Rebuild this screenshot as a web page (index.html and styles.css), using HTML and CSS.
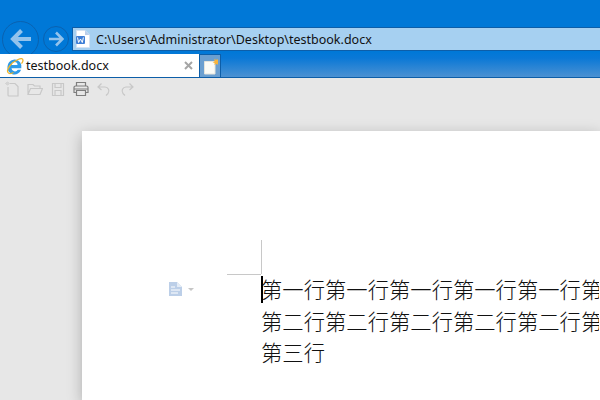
FILE: index.html
```html
<!DOCTYPE html>
<html lang="zh">
<head>
<meta charset="utf-8">
<title>testbook.docx</title>
<link rel="stylesheet" href="styles.css">
</head>
<body>
<header class="chrome">
  <div class="nav-row">
    <button class="nav-btn nav-back" aria-label="Back">
      <svg width="22" height="22" viewBox="0 0 22 22"><path d="M11.500 2.500 3 11l8.500 8.500M4 11H21" fill="none" stroke="#93c3ec" stroke-width="4"/></svg>
    </button>
    <button class="nav-btn nav-forward" aria-label="Forward">
      <svg width="16" height="16" viewBox="0 0 16 16"><path d="M8 1.500 14.500 8 8 14.500M14 8H1" fill="none" stroke="#93c3ec" stroke-width="2.600"/></svg>
    </button>
    <div class="address">
      <svg class="doc-icon" width="15" height="18" viewBox="0 0 15 18">
        <path d="M1.500.5h8.500l4.500 4.500v12.500H1.500z" fill="#fff" stroke="#d5e2f2"/>
        <path d="M10 .5V5h4.500z" fill="#b9cdea"/>
        <rect x="1" y="6" width="9" height="8" rx="1" fill="#3f7fd6"/>
        <path d="M2.500 7.500l1.100 5L5.500 9l1.800 3.500 1.100-5" fill="none" stroke="#fff" stroke-width="1"/>
      </svg>
      <span class="address-text">C:\Users\Administrator\Desktop\testbook.docx</span>
    </div>
  </div>
  <div class="tab-row">
    <div class="tab">
      <svg class="ie-icon" width="18" height="18" viewBox="0 0 18 18">
        <path d="M1.500 10a7 7 0 0 1 13.800-2v3.300H5.500a3.400 3.400 0 0 0 6.300 1.500h3.300A7 7 0 0 1 1.500 10zM5.500 8h6a3 3 0 0 0-6 0z" fill="#2f9be8" fill-rule="evenodd"/>
        <path d="M2 15.500c-2-3 3-10 10-13 3-1.300 5-1.200 5 1 0 1-.6 2-1.500 3.200M2 15.500c1 1.500 3.500 1 5.500 0" fill="none" stroke="#f0b428" stroke-width="1.300"/>
      </svg>
      <span class="tab-title">testbook.docx</span>
      <svg class="tab-close" width="9" height="9" viewBox="0 0 9 9"><path d="M1 1l7 7M8 1 1 8" stroke="#a5a5a5" stroke-width="2"/></svg>
    </div>
    <div class="new-tab">
      <svg width="16" height="18" viewBox="2 1 16 18">
        <path d="M4.500 5.500H15V18H4.500z" fill="#fbfbf6" stroke="#e4e4dc"/>
        <path d="M15.500 1.500l.9 2.300 2.300-.9-.9 2.300 1.200.9-1.200.9.500 2-2-.9-1.900 1 .3-2.200-2.100-.7 2.100-1-.6-2.300 2.100 1z" fill="#f8b43c"/>
      </svg>
    </div>
  </div>
</header>
<div class="toolbar">
  <svg width="16" height="16" viewBox="0 0 16 16"><path d="M5 2.500h6l3 3v9.500H5a1 1 0 0 1-1-1V6" fill="none" stroke="#c8c8c8" stroke-width="1.200"/><path d="M2 1l3 3M5 1 2 4M3.500.5v4M1 2.500h5" stroke="#d4d4d4"/></svg>
  <svg width="16" height="16" viewBox="0 0 16 16"><path d="M1 13.500V3.500h5l1.500 1.500H13v2.500M1 13.500 3.500 7.500H15.500L13 13.500z" fill="none" stroke="#c8c8c8" stroke-width="1.200"/></svg>
  <svg width="16" height="16" viewBox="0 0 16 16"><path d="M2.500 2.500h11v12h-11zM5 2.500v4h6v-4M5 14.500v-5h6v5" fill="none" stroke="#c8c8c8" stroke-width="1.200"/></svg>
  <svg width="16" height="16" viewBox="0 0 16 16"><path d="M3.500 5V1.500h9V5M3.500 11.500H1V6.500a1.500 1.500 0 0 1 1.500-1.500h11A1.500 1.500 0 0 1 15 6.500v5h-2.500M3.500 9.500h9v5h-9zM1 8h14" fill="none" stroke="#7e7e7e" stroke-width="1.200"/></svg>
  <svg width="16" height="16" viewBox="0 0 16 16"><path d="M5.500 2.500 2 6l3.500 3M2.500 6H9a4 4 0 0 1 3 6.500L10 14.500" fill="none" stroke="#c8c8c8" stroke-width="1.200"/></svg>
  <svg width="16" height="16" viewBox="0 0 16 16"><path d="M10.500 2.500 14 6l-3.500 3M13.500 6H7a4 4 0 0 0-3 6.500L6 14.500" fill="none" stroke="#c8c8c8" stroke-width="1.200"/></svg>
</div>
<main class="workspace">
  <article class="page">
    <span class="crop crop-v"></span>
    <span class="crop crop-h"></span>
    <div class="para-mark">
      <svg width="13" height="14" viewBox="0 0 13 14"><path d="M0 0h8l5 5v9H0z" fill="#bccfe8"/><path d="M8 0v5h5z" fill="#e4ecf6"/><path d="M2 5h4M2 8h9M2 11h7" stroke="#fff"/></svg>
      <span class="para-caret"></span>
    </div>
    <div class="text">
      <span class="cursor"></span>
      <p>第一行第一行第一行第一行第一行第</p>
      <p>第二行第二行第二行第二行第二行第</p>
      <p>第三行</p>
    </div>
  </article>
</main>
</body>
</html>
```
FILE: styles.css
```css
* { box-sizing: border-box; }
html, body { margin: 0; height: 100%; }
body {
  width: 600px;
  height: 400px;
  overflow: hidden;
  background: #e7e7e7;
  font-family: "Noto Sans", "Liberation Sans", sans-serif;
  display: flex;
  flex-direction: column;
}
.chrome {
  height: 78px;
  flex: none;
  position: relative;
  background: linear-gradient(#0078d7 0, #0078d7 52px, #0a78d6 58px, #4b91d2 77px);
  border-bottom: 1px solid #0d5ea8;
  padding-top: 27px;
}
.nav-row {
  height: 24px;
  display: flex;
  align-items: center;
}
.nav-btn {
  flex: none;
  padding: 0;
  margin: 0;
  background: #0078d7;
  border: 1px solid #0a62b0;
  border-radius: 50%;
  display: flex;
  align-items: center;
  justify-content: center;
  position: relative;
  z-index: 1;
}
.nav-back { width: 37px; height: 37px; margin-left: 2px; }
.nav-forward { width: 26px; height: 26px; margin-left: 4px; }
.address {
  flex: 1;
  margin-left: 3px;
  height: 24px;
  background: #a6d0f1;
  border: 1px solid #0d5ea8;
  border-right: 0;
  display: flex;
  align-items: center;
  padding-left: 2px;
  position: relative;
  z-index: 1;
}
.doc-icon { flex: none; }
.address-text {
  margin-left: 6px;
  font-size: 12.5px;
  color: #111;
  white-space: nowrap;
}
.tab-row {
  height: 26px;
  display: flex;
  align-items: flex-end;
  padding-top: 3px;
  position: relative;
  z-index: 2;
}
.tab {
  width: 199px;
  height: 23px;
  background: #fff;
  display: flex;
  align-items: center;
  padding-left: 6px;
  padding-right: 6px;
}
.ie-icon { flex: none; }
.tab-title {
  margin-left: 2px;
  font-size: 12.5px;
  color: #111;
  flex: 1;
}
.new-tab {
  width: 22px;
  height: 23px;
  background: #6b9fd0;
  border: 1px solid #0d5ea8;
  border-bottom: 0;
  display: flex;
  align-items: center;
  justify-content: center;
}
.toolbar {
  height: 21px;
  flex: none;
  display: flex;
  align-items: center;
  gap: 7px;
  padding-left: 4px;
  padding-top: 1px;
}
.workspace {
  flex: 1;
  min-height: 0;
  padding: 32px 0 0 82px;
}
.page {
  position: relative;
  height: 100%;
  background: #fff;
  box-shadow: 0 4px 14px rgba(0, 0, 0, .25);
  padding: 143px 0 0 180px;
}
.crop { position: absolute; background: #c8c8c8; }
.crop-v { left: 179px; top: 109px; width: 1px; height: 34px; }
.crop-h { left: 145px; top: 143px; width: 34px; height: 1px; }
.para-mark {
  position: absolute;
  left: 87px;
  top: 151px;
  display: flex;
  align-items: center;
  gap: 6px;
}
.para-caret {
  border-left: 3px solid transparent;
  border-right: 3px solid transparent;
  border-top: 3px solid #c6c6c6;
}
.text {
  position: relative;
  width: 338px;
  overflow: hidden;
  font-family: "Noto Sans CJK SC", sans-serif;
  font-size: 21.33px;
  font-weight: 300;
  line-height: 31.7px;
  color: #111;
  margin-left: -1px;
  margin-top: -1px;
}
.text p { margin: 0; white-space: nowrap; }
.cursor {
  position: absolute;
  left: 0;
  top: 3px;
  width: 2px;
  height: 27px;
  background: #000;
}
```
